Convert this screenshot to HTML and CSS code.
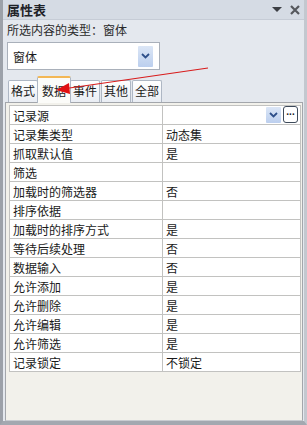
FILE: index.html
```html
<!DOCTYPE html>
<html lang="zh-CN">
<head>
  <meta charset="UTF-8">
  <title>属性表</title>
  <link rel="stylesheet" href="styles.css">
</head>
<body>
  <div class="pane">
    <div class="titlebar">
      <span class="title">属性表</span>
      <span class="tools">
        <svg width="10" height="6" viewBox="0 0 10 6"><path d="M0 0 H10 L5 5 Z" fill="#3c3f44"/></svg>
        <svg width="10" height="10" viewBox="0 0 10 10"><path d="M1 1 L9 9 M9 1 L1 9" stroke="#55585d" stroke-width="2.2"/></svg>
      </span>
    </div>

    <div class="seltype">所选内容的类型：窗体</div>

    <div class="combo">
      <span>窗体</span>
      <span class="combo-btn">
        <svg width="9" height="6" viewBox="0 0 9 6"><path d="M1 1 L4.5 4.5 L8 1" fill="none" stroke="#2d4f8a" stroke-width="1.8"/></svg>
      </span>
    </div>

    <div class="tabs">
      <span class="tab">格式</span>
      <span class="tab active">数据</span>
      <span class="tab">事件</span>
      <span class="tab">其他</span>
      <span class="tab">全部</span>
    </div>

    <div class="sheet">
      <table class="grid">
        <tr>
          <td>记录源</td>
          <td class="source">
            <span class="drop">
              <svg width="9" height="6" viewBox="0 0 9 6"><path d="M1 1 L4.5 4.5 L8 1" fill="none" stroke="#2d4f8a" stroke-width="1.8"/></svg>
            </span>
            <span class="build">...</span>
          </td>
        </tr>
        <tr><td>记录集类型</td><td>动态集</td></tr>
        <tr><td>抓取默认值</td><td>是</td></tr>
        <tr><td>筛选</td><td></td></tr>
        <tr><td>加载时的筛选器</td><td>否</td></tr>
        <tr><td>排序依据</td><td></td></tr>
        <tr><td>加载时的排序方式</td><td>是</td></tr>
        <tr><td>等待后续处理</td><td>否</td></tr>
        <tr><td>数据输入</td><td>否</td></tr>
        <tr><td>允许添加</td><td>是</td></tr>
        <tr><td>允许删除</td><td>是</td></tr>
        <tr><td>允许编辑</td><td>是</td></tr>
        <tr><td>允许筛选</td><td>是</td></tr>
        <tr><td>记录锁定</td><td>不锁定</td></tr>
      </table>
    </div>

    <!-- red annotation arrow pointing at the 数据 tab -->
    <svg class="arrow" width="307" height="120" viewBox="0 0 307 120">
      <line x1="208" y1="68" x2="66" y2="88.5" stroke="#d81c1c" stroke-width="1.2"/>
      <path d="M56 90 L69 83 L70 94 Z" fill="#e01010"/>
    </svg>
  </div>
</body>
</html>
```

FILE: styles.css
```css
* {
  box-sizing: border-box;
}
body {
  margin: 0;
  font-family: "Noto Sans CJK SC", "Liberation Sans", sans-serif;
  font-size: 12px;
  color: #1a1a1a;
}
.pane {
  position: relative;
  width: 307px;
  height: 425px;
  display: flex;
  flex-direction: column;
  background: #e4e8ee;
  border-left: 3px solid #9ca1a9;
  border-bottom: 4px solid #a3a8b0;
  border-right: 3px solid #c3c8cf;
}
.titlebar {
  height: 20px;
  display: flex;
  align-items: center;
  justify-content: space-between;
  padding: 0 4px 0 4px;
  background: #d5dbe4;
  border-bottom: 1px solid #c6ccd6;
}
.title {
  font-weight: bold;
  font-size: 13px;
  color: #1e2228;
}
.tools {
  display: flex;
  align-items: center;
  gap: 8px;
}
.seltype {
  height: 21px;
  line-height: 20px;
  padding-left: 4px;
  color: #2a2a2a;
}
.combo {
  margin: 1px 0 0 4px;
  width: 153px;
  height: 28px;
  display: flex;
  align-items: center;
  justify-content: space-between;
  padding: 0 6px 0 5px;
  background: #fff;
  border: 1px solid #a9b0ba;
}
.combo-btn,
.drop {
  width: 15px;
  height: 21px;
  display: flex;
  align-items: center;
  justify-content: center;
  background: linear-gradient(#dbe6f6, #bccfee);
  border-radius: 1px;
}
.tabs {
  margin-top: 5px;
  height: 27px;
  display: flex;
  align-items: flex-end;
  padding-left: 5px;
  position: relative;
  z-index: 1;
}
.tab {
  height: 22px;
  line-height: 20px;
  padding: 0 2px;
  margin-right: 1px;
  background: linear-gradient(#ffffff, #e9edf3);
  border: 1px solid #aeb7c4;
  border-bottom: none;
  border-radius: 2px 2px 0 0;
}
.tab.active {
  height: 27px;
  line-height: 26px;
  padding: 0 4px;
  margin: 0 -1px -1px -2px;
  background: #fbfbf8;
  border-top: 2px solid #f3b755;
  border-color: #f3b755 #aeb7c4 #aeb7c4;
}
.sheet {
  flex: 1;
  margin-left: 2px;
  width: 298px;
  padding: 2px 0 0 3px;
  background: #f2f1eb;
  border: 1px solid #a3a6ab;
  border-bottom-color: #c9ccd1;
}
.grid {
  border-collapse: collapse;
  width: 292px;
  background: #fff;
}
.grid td {
  height: 19px;
  padding: 0 0 0 3px;
  border: 1px solid #c2c2c0;
  line-height: 17px;
  white-space: nowrap;
}
.grid td:first-child {
  width: 153px;
}
.source {
  position: relative;
}
.drop {
  position: absolute;
  right: 19px;
  top: 1px;
  height: 16px;
}
.build {
  position: absolute;
  right: 2px;
  top: 0;
  width: 15px;
  height: 17px;
  border: 1px solid #3d4a5a;
  border-radius: 3px;
  background: #fff;
  font-weight: bold;
  font-size: 10px;
  line-height: 10px;
  text-align: center;
  font-family: "Liberation Sans", sans-serif;
}
.arrow {
  position: absolute;
  left: -3px;
  top: 0;
  z-index: 2;
}
```
